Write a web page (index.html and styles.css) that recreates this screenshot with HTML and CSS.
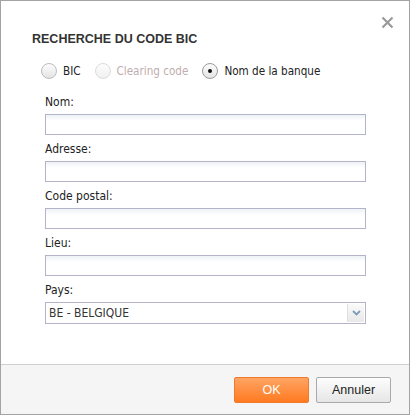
FILE: index.html
```html
<!DOCTYPE html>
<html lang="fr">
<head>
    <meta charset="UTF-8">
    <title>Recherche du code BIC</title>
    <link rel="stylesheet" href="styles.css">
</head>
<body>
    <div class="dialog">
        <div class="dialog-body">
            <span class="close">
                <svg width="13" height="13" viewBox="0 0 13 13"><path d="M1.5 1.5 L11.5 11.5 M11.5 1.5 L1.5 11.5" stroke="#9a9a9a" stroke-width="2.2"/></svg>
            </span>
            <h2 class="title">RECHERCHE DU CODE BIC</h2>

            <div class="radios">
                <label class="radio"><span class="dot"></span>BIC</label>
                <label class="radio disabled"><span class="dot"></span>Clearing code</label>
                <label class="radio checked"><span class="dot"></span>Nom de la banque</label>
            </div>

            <div class="field">
                <label>Nom:</label>
                <div class="input"></div>
            </div>
            <div class="field">
                <label>Adresse:</label>
                <div class="input"></div>
            </div>
            <div class="field">
                <label>Code postal:</label>
                <div class="input"></div>
            </div>
            <div class="field">
                <label>Lieu:</label>
                <div class="input"></div>
            </div>
            <div class="field">
                <label>Pays:</label>
                <div class="select">
                    <span class="value">BE - BELGIQUE</span>
                    <span class="arrow">
                        <svg width="9" height="6" viewBox="0 0 9 6"><path d="M1 1 L4.5 4.5 L8 1" fill="none" stroke="#7f9db9" stroke-width="1.8"/></svg>
                    </span>
                </div>
            </div>
        </div>
        <div class="dialog-footer">
            <button class="btn btn-ok">OK</button>
            <button class="btn btn-cancel">Annuler</button>
        </div>
    </div>
</body>
</html>
```

FILE: styles.css
```css
body {
    margin: 0;
    padding: 0;
    font-family: "DejaVu Sans Condensed", "DejaVu Sans", sans-serif;
    font-size: 12px;
    color: #222;
}
.dialog {
    width: 408px;
    height: 413px;
    border: 1px solid #a3a3a3;
    background: #fff;
    display: flex;
    flex-direction: column;
}
.dialog-body {
    position: relative;
    flex: 1;
    padding: 0 44px;
}
.close {
    position: absolute;
    top: 15px;
    right: 15px;
    display: flex;
}
.title {
    margin: 31px 0 0 -13px;
    font-family: "Liberation Sans", Arial, sans-serif;
    font-size: 12.5px;
    font-weight: bold;
    color: #333;
    line-height: 14px;
}
.radios {
    display: flex;
    align-items: center;
    margin: 17px 0 0 -4px;
    height: 16px;
    font-size: 11.6px;
}
.radio {
    display: flex;
    align-items: center;
    margin-right: 14px;
    color: #222;
}
.radio .dot {
    width: 14px;
    height: 14px;
    border: 1px solid #bdbdbd;
    border-radius: 50%;
    background: linear-gradient(#fcfcfc, #e4e4e4);
    margin-right: 6px;
    position: relative;
}
.radio.disabled {
    color: #bfaeae;
}
.radio.disabled .dot {
    border-color: #dcdcdc;
    background: linear-gradient(#fdfdfd, #f0f0f0);
}
.radio.checked .dot {
    border-color: #9a9a9a;
}
.radio.checked .dot::after {
    content: "";
    position: absolute;
    left: 5px;
    top: 5px;
    width: 4px;
    height: 4px;
    border-radius: 50%;
    background: #111;
}
.field {
    margin-top: 7px;
}
.radios + .field {
    margin-top: 16px;
}
.field label {
    display: block;
    line-height: 15px;
    margin-bottom: 4px;
}
.input,
.select {
    height: 19px;
    border: 1px solid #b3b3c9;
    background: linear-gradient(#eef2f6, #fff 6px);
    width: 319px;
}
.select {
    display: flex;
    align-items: center;
    background: #fff;
    height: 20px;
}
.select .value {
    flex: 1;
    padding-left: 3px;
    color: #333;
}
.select .arrow {
    width: 16px;
    height: 18px;
    border-left: 1px solid #e0e0e0;
    background: linear-gradient(#fafafa, #e8e8e8);
    display: flex;
    align-items: center;
    justify-content: center;
    margin-right: 1px;
}
.dialog-footer {
    height: 50px;
    border-top: 1px solid #d0d0d0;
    background: #f5f5f5;
    display: flex;
    justify-content: flex-end;
    align-items: flex-start;
    padding: 12px 18px 0 0;
    box-sizing: border-box;
    gap: 7px;
}
.btn {
    width: 75px;
    height: 26px;
    font-family: "Liberation Sans", Arial, sans-serif;
    font-size: 12.5px;
    border-radius: 2px;
    padding: 0;
}
.btn-ok {
    border: 1px solid #f07a2a;
    background: linear-gradient(#ffa463, #ff7a21);
    color: #fff;
}
.btn-cancel {
    border: 1px solid #a9a9a9;
    background: linear-gradient(#fdfdfd, #e6e6e6);
    color: #222;
}
```
